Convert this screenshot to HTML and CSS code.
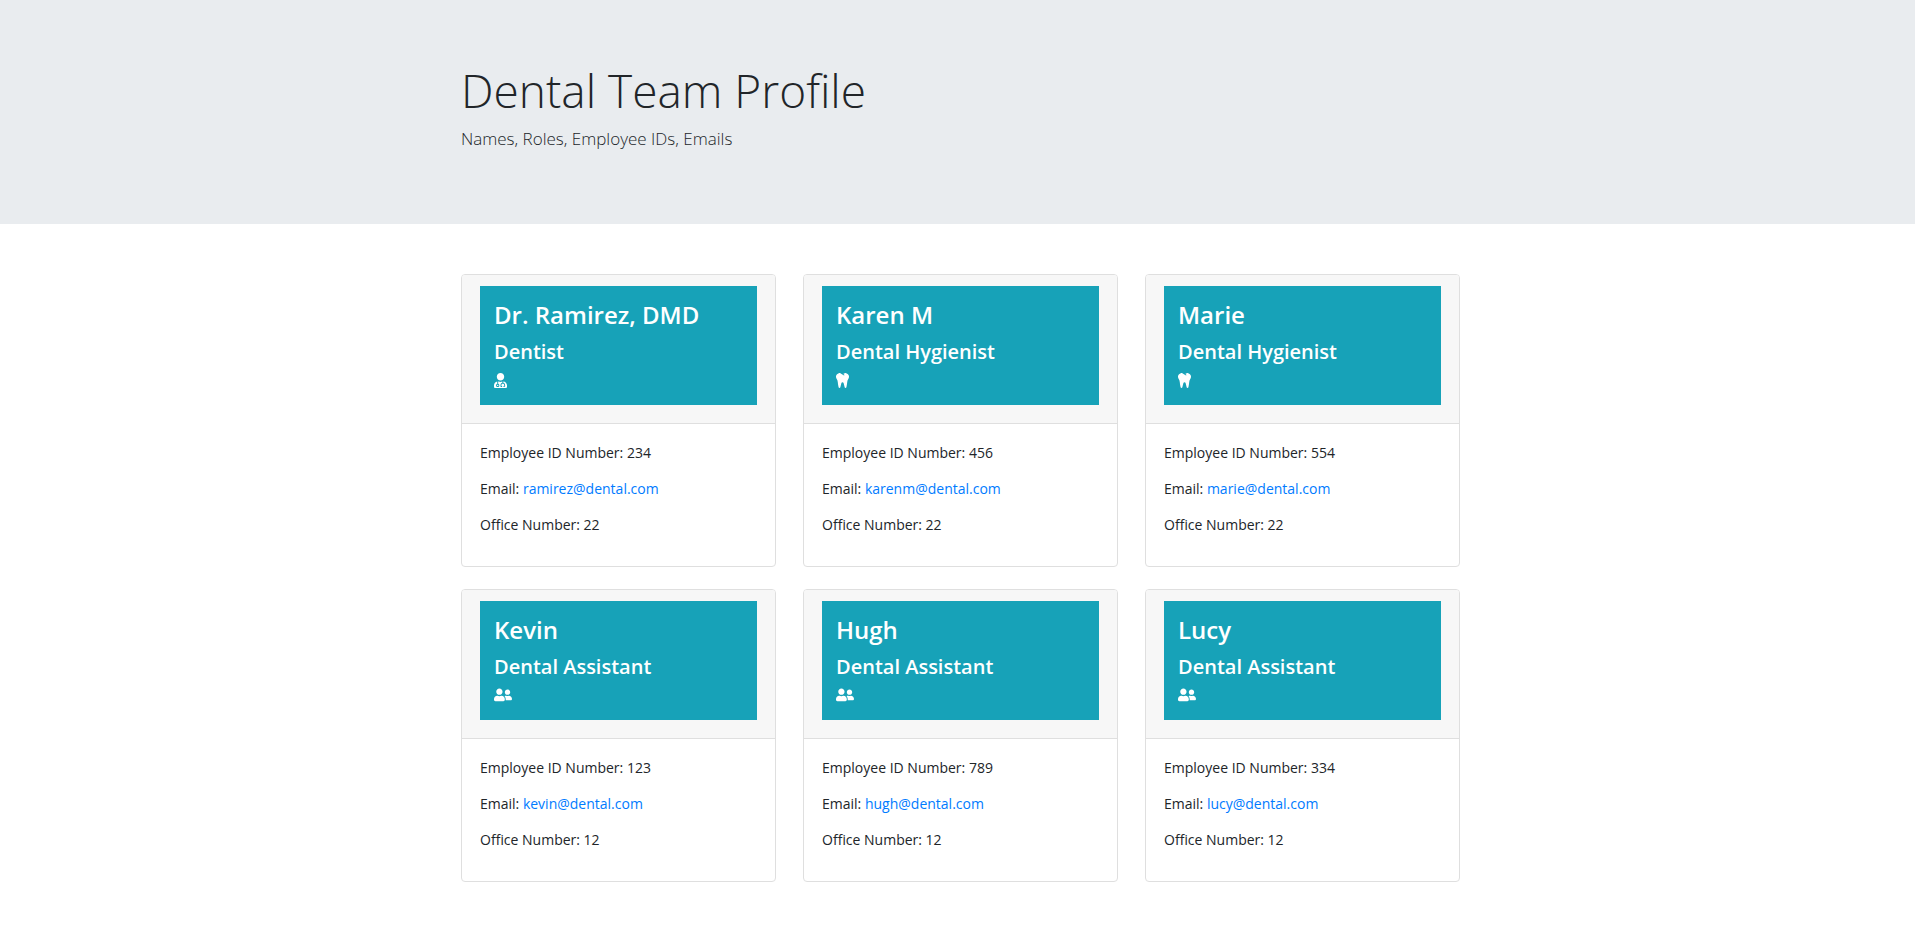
FILE: index.html
```html
<!DOCTYPE html>
<html lang="en">
<head>
<meta charset="utf-8">
<meta name="viewport" content="width=device-width, initial-scale=1">
<title>Dental Team Profile</title>
<link rel="stylesheet" href="styles.css">
</head>
<body>
<svg class="sprite" aria-hidden="true">
  <symbol id="doctor" viewBox="0 0 448 512"><path d="M224 256c70.7 0 128-57.3 128-128S294.7 0 224 0 96 57.3 96 128s57.3 128 128 128zM104 424c0 13.3 10.7 24 24 24s24-10.7 24-24-10.7-24-24-24-24 10.7-24 24zm216-135.4v49c36.5 7.4 64 39.8 64 78.4v41.7c0 7.6-5.4 14.2-12.9 15.7l-32.2 6.4c-4.3.9-8.5-1.9-9.4-6.3l-3.1-15.7c-.9-4.3 1.9-8.6 6.3-9.4l19.3-3.9V416c0-62.8-96-65.1-96 1.9v26.7l19.3 3.9c4.3.9 7.1 5.1 6.3 9.4l-3.1 15.7c-.9 4.3-5.1 7.1-9.4 6.3l-31.2-4.2c-7.9-1.1-13.8-7.8-13.8-15.9V416c0-38.6 27.5-70.9 64-78.4v-45.2c-2.2.7-4.4 1.1-6.6 1.9-18 6.3-37.3 9.8-57.4 9.8s-39.4-3.5-57.4-9.8c-7.4-2.6-14.9-4.2-22.6-5.2v81.6c23.1 6.9 40 28.1 40 53.4 0 30.9-25.1 56-56 56s-56-25.1-56-56c0-25.3 16.9-46.5 40-53.4v-80.4C48.5 301 0 355.8 0 422.4v44.8C0 491.9 20.1 512 44.8 512h358.4c24.7 0 44.8-20.1 44.8-44.8v-44.8c0-72-56.8-130.3-128-133.8z"/></symbol>
  <symbol id="tooth" viewBox="0 0 448 512"><path d="M443.98 96.25c-11.01-45.22-47.11-82.06-92.01-93.72-32.19-8.36-63 5.1-89.14 24.33-3.25 2.39-6.96 3.73-10.5 5.48l28.32 18.21c7.42 4.77 9.58 14.67 4.8 22.11-4.46 6.95-14.27 9.86-22.11 4.8L162.83 12.84c-20.7-10.85-43.38-16.4-66.81-10.31-44.9 11.67-81 48.5-92.01 93.72-10.13 41.62-.42 80.81 21.5 110.43 23.36 31.57 32.68 68.66 36.29 107.35 4.4 47.16 10.33 94.16 20.94 140.32l7.8 33.95c3.19 13.87 15.49 23.7 29.67 23.7 13.97 0 26.15-9.55 29.54-23.16l34.47-138.42c4.56-18.32 20.96-31.16 39.76-31.16s35.2 12.85 39.76 31.16l34.47 138.42c3.39 13.61 15.57 23.16 29.54 23.16 14.18 0 26.48-9.83 29.67-23.7l7.8-33.95c10.61-46.15 16.53-93.16 20.94-140.32 3.61-38.7 12.93-75.78 36.29-107.35 21.95-29.61 31.66-68.8 21.53-110.43z"/></symbol>
  <symbol id="people" viewBox="0 24 640 512"><path d="M192 256c61.9 0 112-50.1 112-112S253.9 32 192 32 80 82.1 80 144s50.1 112 112 112zm76.8 32h-8.3c-20.8 10-43.9 16-68.5 16s-47.6-6-68.5-16h-8.3C51.6 288 0 339.6 0 403.2V432c0 26.5 21.5 48 48 48h288c26.5 0 48-21.5 48-48v-28.8c0-63.6-51.6-115.2-115.2-115.2zM480 256c53 0 96-43 96-96s-43-96-96-96-96 43-96 96 43 96 96 96zm48 32h-3.8c-13.9 4.8-28.6 8-44.2 8s-30.3-3.2-44.2-8H432c-20.4 0-39.2 5.9-55.7 15.4 24.4 26.3 39.7 61.2 39.7 99.8v38.4c0 2.2-.5 4.3-.6 6.4H592c26.5 0 48-21.5 48-48 0-61.9-50.1-112-112-112z"/></symbol>
</svg>

<header class="hero">
  <div class="container">
    <h1 class="hero-title">Dental Team Profile</h1>
    <p class="hero-lead">Names, Roles, Employee IDs, Emails</p>
  </div>
</header>

<main class="team">
  <div class="container team-grid">
    <article class="card">
      <div class="card-header"><div class="banner">
        <h2 class="name">Dr. Ramirez, DMD</h2>
        <h3 class="role">Dentist</h3>
        <svg class="icon" aria-hidden="true"><use href="#doctor"/></svg>
      </div></div>
      <div class="card-body">
        <p>Employee ID Number: 234</p>
        <p>Email: <a href="mailto:ramirez@dental.com">ramirez@dental.com</a></p>
        <p>Office Number: 22</p>
      </div>
    </article>
    <article class="card">
      <div class="card-header"><div class="banner">
        <h2 class="name">Karen M</h2>
        <h3 class="role">Dental Hygienist</h3>
        <svg class="icon" aria-hidden="true"><use href="#tooth"/></svg>
      </div></div>
      <div class="card-body">
        <p>Employee ID Number: 456</p>
        <p>Email: <a href="mailto:karenm@dental.com">karenm@dental.com</a></p>
        <p>Office Number: 22</p>
      </div>
    </article>
    <article class="card">
      <div class="card-header"><div class="banner">
        <h2 class="name">Marie</h2>
        <h3 class="role">Dental Hygienist</h3>
        <svg class="icon" aria-hidden="true"><use href="#tooth"/></svg>
      </div></div>
      <div class="card-body">
        <p>Employee ID Number: 554</p>
        <p>Email: <a href="mailto:marie@dental.com">marie@dental.com</a></p>
        <p>Office Number: 22</p>
      </div>
    </article>
    <article class="card">
      <div class="card-header"><div class="banner">
        <h2 class="name">Kevin</h2>
        <h3 class="role">Dental Assistant</h3>
        <svg class="icon icon-wide" aria-hidden="true"><use href="#people"/></svg>
      </div></div>
      <div class="card-body">
        <p>Employee ID Number: 123</p>
        <p>Email: <a href="mailto:kevin@dental.com">kevin@dental.com</a></p>
        <p>Office Number: 12</p>
      </div>
    </article>
    <article class="card">
      <div class="card-header"><div class="banner">
        <h2 class="name">Hugh</h2>
        <h3 class="role">Dental Assistant</h3>
        <svg class="icon icon-wide" aria-hidden="true"><use href="#people"/></svg>
      </div></div>
      <div class="card-body">
        <p>Employee ID Number: 789</p>
        <p>Email: <a href="mailto:hugh@dental.com">hugh@dental.com</a></p>
        <p>Office Number: 12</p>
      </div>
    </article>
    <article class="card">
      <div class="card-header"><div class="banner">
        <h2 class="name">Lucy</h2>
        <h3 class="role">Dental Assistant</h3>
        <svg class="icon icon-wide" aria-hidden="true"><use href="#people"/></svg>
      </div></div>
      <div class="card-body">
        <p>Employee ID Number: 334</p>
        <p>Email: <a href="mailto:lucy@dental.com">lucy@dental.com</a></p>
        <p>Office Number: 12</p>
      </div>
    </article>
  </div>
</main>
</body>
</html>
```
FILE: styles.css
```css
* {
  box-sizing: border-box;
}

body {
  margin: 0;
  background: #fff;
  color: #212529;
  font-family: "Open Sans", "Noto Sans", sans-serif;
  font-size: 14px;
  line-height: 22px;
}

h1, h2, h3, p {
  margin: 0;
}

a {
  color: #007bff;
  text-decoration: none;
}

a:hover {
  text-decoration: underline;
}

.sprite {
  display: none;
}

.container {
  max-width: 999px;
  margin: 0 auto;
}

.hero {
  padding: 60px 14px 72px 20px;
  background: #e9ecef;
}

.hero-title {
  margin-bottom: 5px;
  font-size: 46px;
  font-weight: 300;
  line-height: 60px;
}

.hero-lead {
  font-size: 17px;
  font-weight: 300;
  line-height: 27px;
}

.team {
  padding: 50px 14px 50px 20px;
}

.team-grid {
  display: grid;
  grid-template-columns: repeat(auto-fit, minmax(280px, 1fr));
  gap: 22px 27px;
}

.card {
  overflow: hidden;
  border: 1px solid #dfdfdf;
  border-radius: 4px;
}

.card-header {
  padding: 11px 18px 18px;
  border-bottom: 1px solid #dfdfdf;
  background: #f7f7f7;
}

.banner {
  display: flex;
  flex-direction: column;
  gap: 8px;
  padding: 14px 14px 17px;
  background: #17a2b8;
  color: #fff;
}

.name {
  font-size: 24px;
  font-weight: 600;
  line-height: 30px;
}

.role {
  font-size: 20px;
  font-weight: 600;
  line-height: 27px;
}

.icon {
  width: 13px;
  height: 15px;
  fill: currentColor;
}

.icon-wide {
  width: 18px;
}

.card-body {
  display: flex;
  flex-direction: column;
  gap: 14px;
  padding: 18px 18px 30px;
}
```
